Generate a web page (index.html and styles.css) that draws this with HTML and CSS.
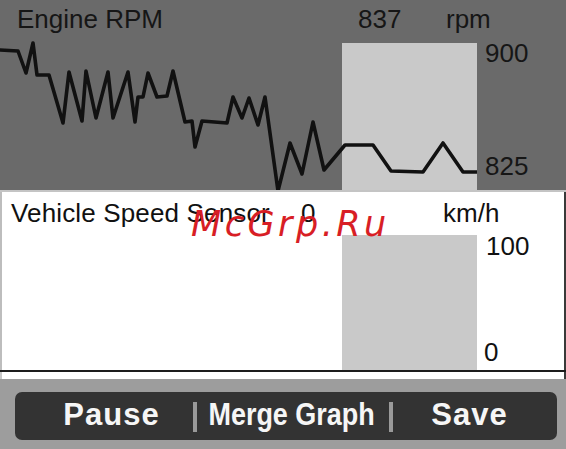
FILE: index.html
```html
<!DOCTYPE html>
<html lang="en">
<head>
<meta charset="utf-8">
<title>Live Data Graph</title>
<link rel="stylesheet" href="styles.css">
</head>
<body>
<div class="screen">
  <section class="chart chart-rpm">
    <div class="chart-head">
      <span class="name">Engine RPM</span>
      <span class="value">837</span>
      <span class="unit">rpm</span>
    </div>
    <div class="chart-body">
      <svg class="plot" viewBox="0 40 477 150" width="477" height="150" aria-hidden="true">
        <rect x="342" y="43" width="135" height="147" fill="#c9c9c9"/>
        <polyline fill="none" stroke="#111" stroke-width="3.6" stroke-linejoin="round" stroke-linecap="round"
          points="0,50 18,51 26,73 33,43 37,75 49,75 63,123 69,72 82,121 86,71 96,118 108,72 113,118 128,72 135,122 138,97 143,97 148,73 157,97 167,96 173,71 185,122 192,121 195,147 202,121 227,123 233,97 242,118 249,98 258,125 265,97 278,191 290,143 302,174 313,122 324,170 345,145 373,145 391,171 423,172 443,143 463,172 477,172"/>
      </svg>
      <div class="scale">
        <span class="tick-top">900</span>
        <span class="tick-bottom">825</span>
      </div>
    </div>
  </section>

  <section class="chart chart-speed">
    <div class="chart-head">
      <span class="name">Vehicle Speed Sensor</span>
      <span class="value">0</span>
      <span class="unit">km/h</span>
    </div>
    <div class="chart-body">
      <svg class="plot" viewBox="0 0 477 135" width="477" height="135" aria-hidden="true">
        <rect x="342" y="0" width="135" height="135" fill="#c9c9c9"/>
      </svg>
      <div class="scale">
        <span class="tick-top">100</span>
        <span class="tick-bottom">0</span>
      </div>
    </div>
  </section>

  <div class="strip"></div>

  <nav class="toolbar">
    <span class="btn btn-pause">Pause</span>
    <span class="sep sep-1"></span>
    <span class="btn btn-merge"><span class="squeeze">Merge Graph</span></span>
    <span class="sep sep-2"></span>
    <span class="btn btn-save">Save</span>
  </nav>

  <div class="watermark">McGrp.Ru</div>
</div>
</body>
</html>
```

FILE: styles.css
```css
html, body {
  margin: 0;
  padding: 0;
}

body {
  width: 566px;
  height: 449px;
  overflow: hidden;
  background: #9d9d9d;
  font-family: "Liberation Sans", Arial, sans-serif;
}

.screen {
  position: relative;
  width: 566px;
  height: 449px;
}

.chart-head {
  display: flex;
  box-sizing: border-box;
  font-size: 26px;
  line-height: 26px;
  white-space: nowrap;
}

.chart-body {
  display: flex;
}

.plot {
  display: block;
  flex: none;
}

.scale {
  display: flex;
  flex-direction: column;
  justify-content: space-between;
  box-sizing: border-box;
  font-size: 26px;
  line-height: 26px;
  padding-left: 8px;
}

/* Engine RPM */
.chart-rpm {
  height: 190px;
  background: #6a6a6a;
  color: #161616;
}

.chart-rpm .chart-head {
  height: 40px;
  padding-top: 6px;
}

.chart-rpm .name {
  margin-left: 17px;
  width: 341px;
}

.chart-rpm .value {
  width: 88px;
}

.chart-rpm .chart-body {
  height: 150px;
}

.chart-rpm .scale {
  height: 150px;
  padding-bottom: 11px;
}

/* Vehicle speed */
.chart-speed {
  height: 180px;
  background: #fff;
  color: #111;
  border-bottom: 2px solid #1c1c1c;
  box-shadow: inset 0 2px 0 #c4c4c4, inset 2px 0 0 #bdbdbd, inset -2px 0 0 #3a3a3a;
}

.chart-speed .chart-head {
  height: 45px;
  padding-top: 10px;
}

.chart-speed .name {
  margin-left: 11px;
  width: 290px;
  letter-spacing: 0.15px;
}

.chart-speed .value {
  width: 142px;
}

.chart-speed .chart-body {
  height: 135px;
}

.chart-speed .scale {
  height: 135px;
  padding-bottom: 5px;
}

.chart-speed .tick-top {
  margin-top: -2px;
  margin-left: 1px;
}

.chart-speed .tick-bottom {
  margin-left: -1px;
}

.strip {
  height: 7px;
  background: #fff;
  box-shadow: inset -2px 0 0 #3a3a3a, inset 2px 0 0 #c8c8c8;
}

/* Toolbar */
.toolbar {
  display: flex;
  align-items: flex-start;
  box-sizing: border-box;
  margin: 13px 0 0 15px;
  width: 542px;
  height: 48px;
  padding-top: 7px;
  border-radius: 7px;
  background: #333333;
  color: #f6f6f6;
  font-weight: bold;
  font-size: 31px;
  line-height: 31px;
  white-space: nowrap;
}

.btn {
  display: flex;
  justify-content: center;
  flex: none;
}

.btn-pause {
  margin-left: 49px;
  width: 95px;
  letter-spacing: 1px;
}

.btn-merge {
  margin-left: 12px;
  width: 165px;
}

.squeeze {
  display: inline-block;
  transform: scaleX(0.87);
}

.btn-save {
  margin-left: 39px;
  width: 75px;
  letter-spacing: 1px;
}

.sep {
  flex: none;
  width: 4px;
  height: 30px;
  margin-top: 3px;
  background: #9a9a9a;
}

.sep-1 {
  margin-left: 34px;
}

.sep-2 {
  margin-left: 15px;
}

/* Watermark overlay */
.watermark {
  position: absolute;
  left: 191px;
  top: 207px;
  font-family: "DejaVu Sans", Verdana, sans-serif;
  font-style: oblique;
  font-size: 35px;
  line-height: 35px;
  letter-spacing: 3.5px;
  color: #d81e25;
  white-space: nowrap;
}
```
